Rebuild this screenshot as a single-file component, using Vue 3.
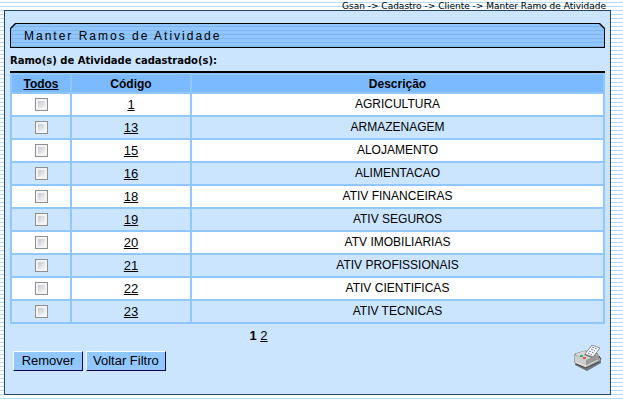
<script setup>
import { ref, computed } from "vue"

const rows = ref([
  { code: 1, name: "AGRICULTURA" },
  { code: 13, name: "ARMAZENAGEM" },
  { code: 15, name: "ALOJAMENTO" },
  { code: 16, name: "ALIMENTACAO" },
  { code: 18, name: "ATIV FINANCEIRAS" },
  { code: 19, name: "ATIV SEGUROS" },
  { code: 20, name: "ATV IMOBILIARIAS" },
  { code: 21, name: "ATIV PROFISSIONAIS" },
  { code: 22, name: "ATIV CIENTIFICAS" },
  { code: 23, name: "ATIV TECNICAS" },
])
const selected = ref([])

const allSelected = computed(() => rows.value.length > 0 && selected.value.length === rows.value.length)

const toggleAll = () => {
  selected.value = allSelected.value ? [] : rows.value.map((row) => row.code)
}

const removeSelected = () => {
  rows.value = rows.value.filter((row) => !selected.value.includes(row.code))
  selected.value = []
}
</script>

<template>
  <div class="page">
    <nav class="breadcrumb">Gsan -&gt; Cadastro -&gt; Cliente -&gt; Manter Ramo de Atividade</nav>

    <main class="panel">
      <div class="title-edge">
        <h1 class="title">Manter Ramos de Atividade</h1>
      </div>

      <h2 class="subtitle">Ramo(s) de Atividade cadastrado(s):</h2>

      <table class="list">
        <thead>
          <tr>
            <th class="col-check"><a href="#" @click.prevent="toggleAll">Todos</a></th>
            <th class="col-code">Código</th>
            <th>Descrição</th>
          </tr>
        </thead>
        <tbody>
          <tr v-for="row in rows" :key="row.code">
            <td><input v-model="selected" type="checkbox" :value="row.code" :aria-label="row.name"></td>
            <td class="code"><a href="#">{{ row.code }}</a></td>
            <td>{{ row.name }}</td>
          </tr>
        </tbody>
      </table>

      <div class="pages"><b>1</b> <a href="#">2</a></div>

      <div class="footer">
        <button type="button" @click="removeSelected">Remover</button>
        <button type="button">Voltar Filtro</button>
        <a class="print" href="#" aria-label="Imprimir">
          <svg width="28" height="26" viewBox="0 0 28 26">
            <path d="M1 18 L13 24 L27 15 L27 18 L13 26 L1 20z" fill="#6d757b" />
            <path d="M1 9 L11 6 L23 8 L25 12 L27 14 L25 17 L12 24 L1 18z" fill="#a8a8a8" stroke="#707070" />
            <path d="M1 9 L10 6 L25 10 L12 15z" fill="#d6d6d6" />
            <path d="M1 10 L12 15 V23 L1 18z" fill="#cdcdcd" />
            <path d="M12 15 L25 10 V17 L12 23z" fill="#999" />
            <path d="M2 17 L12 21 L24 15" fill="none" stroke="#e6e6e6" />
            <path d="M2 19 L12 23 L25 17 M25 11 L27 14" fill="none" stroke="#444" />
            <path d="M10 10 L13 8 L23 10 L18 13z" fill="#666" />
            <path d="M11 9 L18 0 L26 3 L19 12z" fill="#fff" stroke="#8a8a8a" />
            <path d="M18 2 L23 4 M17 4 L21 6 M15 6 L20 8 M14 8 L18 10" fill="none" stroke="#5a74d0" stroke-dasharray="2 1" />
            <path d="M6 10h3v2H6z" fill="#35b56b" />
            <path d="M9 12h3v2H9z" fill="#e0524e" />
          </svg>
        </a>
      </div>
    </main>
  </div>
</template>

<style>
body {
  background: repeating-linear-gradient(#fff 0 2px, #b5dbf4 2px 3px, #fff 3px 4px);
}
</style>

<style scoped>
.page {
  padding: 0 12px 5px 4px;
  font-family: "Liberation Sans", Arial, sans-serif;
  font-size: 12px;
  color: #000;
}

a {
  color: #000;
}

.breadcrumb {
  height: 10px;
  padding-right: 5px;
  font-family: "DejaVu Sans", Verdana, sans-serif;
  font-size: 9px;
  line-height: 12px;
  text-align: right;
}

.panel {
  padding: 12px 5px 23px;
  border: 1px solid #27475f;
  background: #cbe5fe;
}

/* black shape behind the bar gives the cut corners their outline */
.title-edge {
  padding: 1px;
  background: #000;
  clip-path: polygon(5px 0, calc(100% - 5px) 0, 100% 5px, 100% 100%, 0 100%, 0 5px);
}

.title {
  margin: 0;
  padding: 1px 0 0 13px;
  font-size: 12px;
  font-weight: normal;
  line-height: 22px;
  letter-spacing: 2px;
  background: repeating-linear-gradient(#90c5fd 0 2px, #80b5ea 2px 3px, #90c5fd 3px 4px);
  clip-path: polygon(5px 0, calc(100% - 5px) 0, 100% 5px, 100% 100%, 0 100%, 0 5px);
}

.subtitle {
  margin: 0;
  padding-top: 3px;
  border-bottom: 2px solid #000;
  font-family: "DejaVu Sans", Verdana, sans-serif;
  font-size: 10px;
  line-height: 20px;
}

.list {
  width: 100%;
  table-layout: fixed;
  border-spacing: 2px;
  background: #90c7ff;
  text-align: center;
}

.list th {
  padding: 2px 0 0;
  line-height: 15px;
  background: #7bbaff;
}

.list td {
  height: 21px;
  padding: 0;
  line-height: 21px;
  background: #cbe5fe;
}

.list tr:nth-child(odd) td {
  background: #fff;
}

.list .col-check {
  width: 58px;
}

.list .col-code {
  width: 118px;
}

.list .code {
  font-size: 13px;
}

.list input {
  appearance: none;
  display: block;
  width: 13px;
  height: 13px;
  margin: 0 auto;
  border: 1px solid #8e8f8f;
  background: linear-gradient(135deg, #c5c9d2, #f6f6f6) center / 7px 7px no-repeat #f4f4f4;
}

.list input:checked {
  background: linear-gradient(135deg, #2c5f95, #4a87c4) center / 7px 7px no-repeat #f4f4f4;
}

.pages {
  padding: 4px 98px 2px 0;
  font-size: 13px;
  line-height: 15px;
  text-align: center;
}

.footer {
  display: flex;
  align-items: flex-end;
  gap: 3px;
  padding: 0 3px;
}

.footer button {
  min-width: 70px;
  height: 20px;
  padding: 0 6px;
  border: 1px solid;
  border-color: #fff #00005a #00005a #fff;
  background: #90c7ff;
  font-family: inherit;
  font-size: 13px;
  line-height: 16px;
  color: #000;
}

.print {
  margin-left: auto;
}

.print svg {
  display: block;
}
</style>
